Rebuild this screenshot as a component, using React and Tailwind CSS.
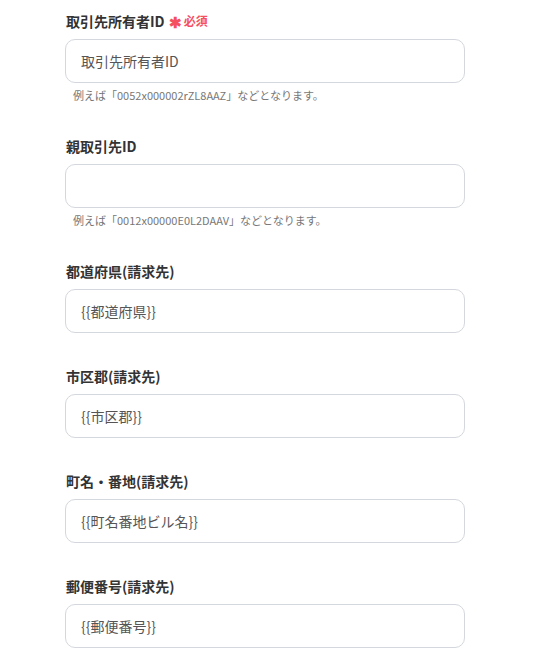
const fields = [
  {
    label: '取引先所有者ID',
    required: true,
    value: '取引先所有者ID',
    help: '例えば「0052x000002rZL8AAZ」などとなります。',
  },
  {
    label: '親取引先ID',
    value: '',
    help: '例えば「0012x00000E0L2DAAV」などとなります。',
  },
  { label: '都道府県(請求先)', value: '{{都道府県}}' },
  { label: '市区郡(請求先)', value: '{{市区郡}}' },
  { label: '町名・番地(請求先)', value: '{{町名番地ビル名}}' },
  { label: '郵便番号(請求先)', value: '{{郵便番号}}' },
]

const Field = ({ label, required, value, help }) => (
  <div className="flex flex-col">
    <div className="flex h-5 items-center gap-1 pl-px">
      <span className="text-[14px] font-bold leading-5 text-[#333]">{label}</span>
      {required && (
        <span className="flex items-center gap-0.5 text-[12px] font-bold leading-5 text-[#f4505f]">
          <span className="text-[15px] leading-none">✱</span>
          必須
        </span>
      )}
    </div>
    <div className="mt-2 flex h-11 w-[400px] items-center rounded-[10px] border border-[#d4d7de] bg-white px-[15px] text-[14px] text-[#555]">
      {value}
    </div>
    {help && (
      <p className="mt-1 pl-2 text-[11px] leading-4 text-[#777]">{help}</p>
    )}
  </div>
)

export default function App() {
  return (
    <div
      className="min-h-[661px] w-[555px] bg-white pl-[65px] pt-[11px]"
      style={{ fontFamily: '"Noto Sans CJK JP", "Noto Sans", sans-serif' }}
    >
      <div className="flex flex-col gap-[33px]">
        {fields.map((f) => (
          <Field key={f.label} {...f} />
        ))}
      </div>
    </div>
  )
}
